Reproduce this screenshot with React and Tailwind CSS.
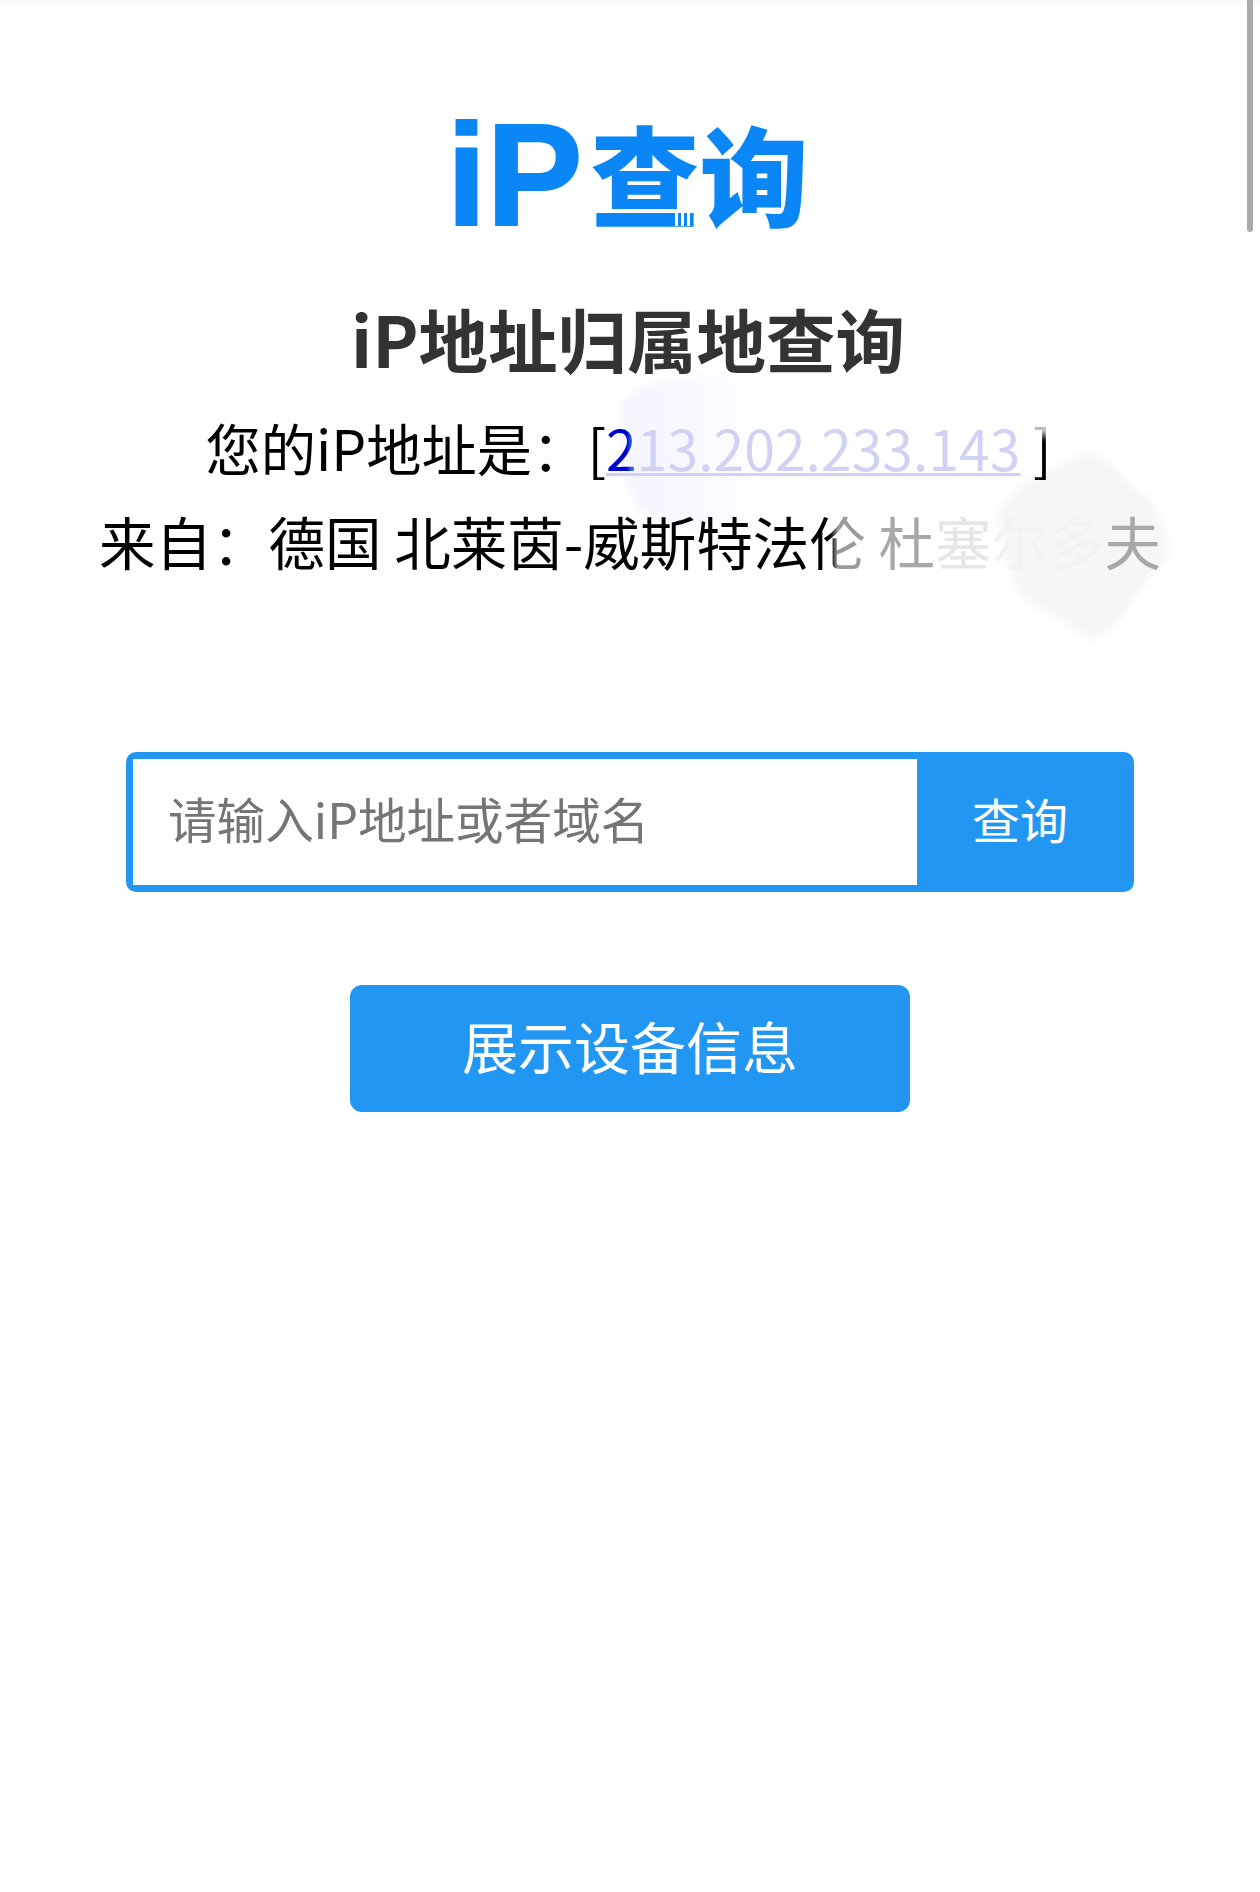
const fontCn = "font-['Noto_Sans_CJK_SC','Noto_Sans',sans-serif]";

// the scribbled-over patches that sit behind the two address lines
const Smudges = () => (
  <svg className="absolute left-0 top-0 h-[1892px] w-[1260px]" viewBox="0 0 1260 1892" fill="none">
    <defs>
      <linearGradient id="lav" x1="0" y1="0" x2="1" y2="0">
        <stop offset="0" stopColor="#f3f4fe" />
        <stop offset="0.55" stopColor="#f8f9ff" />
        <stop offset="1" stopColor="#ffffff" />
      </linearGradient>
      <filter id="soft">
        <feGaussianBlur stdDeviation="5" />
      </filter>
    </defs>
    <path
      d="M622 400 L640 388 L680 378 L738 374 L752 392 L760 440 L756 520 L690 528 L640 512 L622 470 Z"
      fill="url(#lav)"
      filter="url(#soft)"
    />
    <path
      d="M1047 470 L1087 452 L1112 464 L1130 484 L1150 500 L1166 530 L1168 556 L1140 590 L1118 622 L1094 640 L1060 620 L1020 596 L1006 560 L996 512 L1016 490 Z"
      fill="#f6f6f6"
      filter="url(#soft)"
    />
  </svg>
);

export default function App() {
  return (
    <div className={`relative min-h-[1892px] w-[1260px] overflow-hidden bg-white ${fontCn}`}>
      <Smudges />
      <div className="relative flex flex-col items-center">
        <div className="h-[4px] w-full bg-[#fafafa]" />

        <div className="mt-[101px] flex h-[130px] items-center text-[#0a86f7]">
          <span className="mt-[11px] font-['Liberation_Sans',sans-serif] text-[144px] font-bold leading-[130px] [-webkit-text-stroke:2px_#0a86f7]">iP</span>
          <span className="relative ml-[8px] mr-[5px] pt-[3px] text-[109px] font-black leading-[130px]">
            查询
            {/* the small slits at the foot of the logo */}
            <span className="absolute left-[84px] top-[108px] flex gap-[3px]">
              <span className="h-[14px] w-[3px] bg-white" />
              <span className="h-[14px] w-[3px] bg-white" />
              <span className="h-[14px] w-[3px] bg-white" />
            </span>
          </span>
        </div>

        <h1 className="mt-[63px] pr-[4px] text-[69.5px] font-bold leading-[80px] text-[#333333]">iP地址归属地查询</h1>

        <p className="mt-[22px] pr-[3px] text-[55.3px] leading-[94px] text-black">
          您的iP地址是：[
          <a className="bg-gradient-to-r from-[#0000cc] from-[5%] to-[#cfd2f3] to-[9%] bg-clip-text text-transparent underline decoration-[#cfd2f3] decoration-[3px]">
            213.202.233.143
          </a>{" "}
          <span className="bg-gradient-to-b from-[#bdbdbd] from-[30%] to-black to-[45%] bg-clip-text text-transparent">]</span>
        </p>
        <p className="-mt-[1px] text-[56.5px] leading-[94px] text-black">
          来自：德国 北莱茵-威斯特法
          <span className="bg-gradient-to-r from-black from-[35%] to-[#9a9a9a] to-[50%] bg-clip-text text-transparent">伦</span>
          {" "}
          <span className="text-[#a8a8a8]">杜</span>
          <span className="text-[#e6e6e6]">塞</span>
          <span className="text-[#f2f2f2]">尔多</span>
          <span className="text-[#a8a8a8]">夫</span>
        </p>

        <div className="mt-[165px] flex h-[140px] w-[1008px] rounded-[10px] border-[7px] border-[#2196f3] bg-[#2196f3]">
          <div className="flex flex-1 items-center bg-white pb-[8px] pl-[35px] text-[48.6px] text-[#757575]">请输入iP地址或者域名</div>
          <button className="w-[210px] pb-[8px] pr-[4px] text-center text-[48px] text-white">查询</button>
        </div>

        <button className="mt-[93px] h-[127px] w-[560px] rounded-[12px] bg-[#2196f3] pb-[8px] text-[56px] text-white">展示设备信息</button>
      </div>

      {/* scrollbar of the phone browser */}
      <div className="absolute left-[1247px] top-0 h-[232px] w-[6px] rounded-b-[3px] bg-[#aaaaaa]" />
    </div>
  );
}
